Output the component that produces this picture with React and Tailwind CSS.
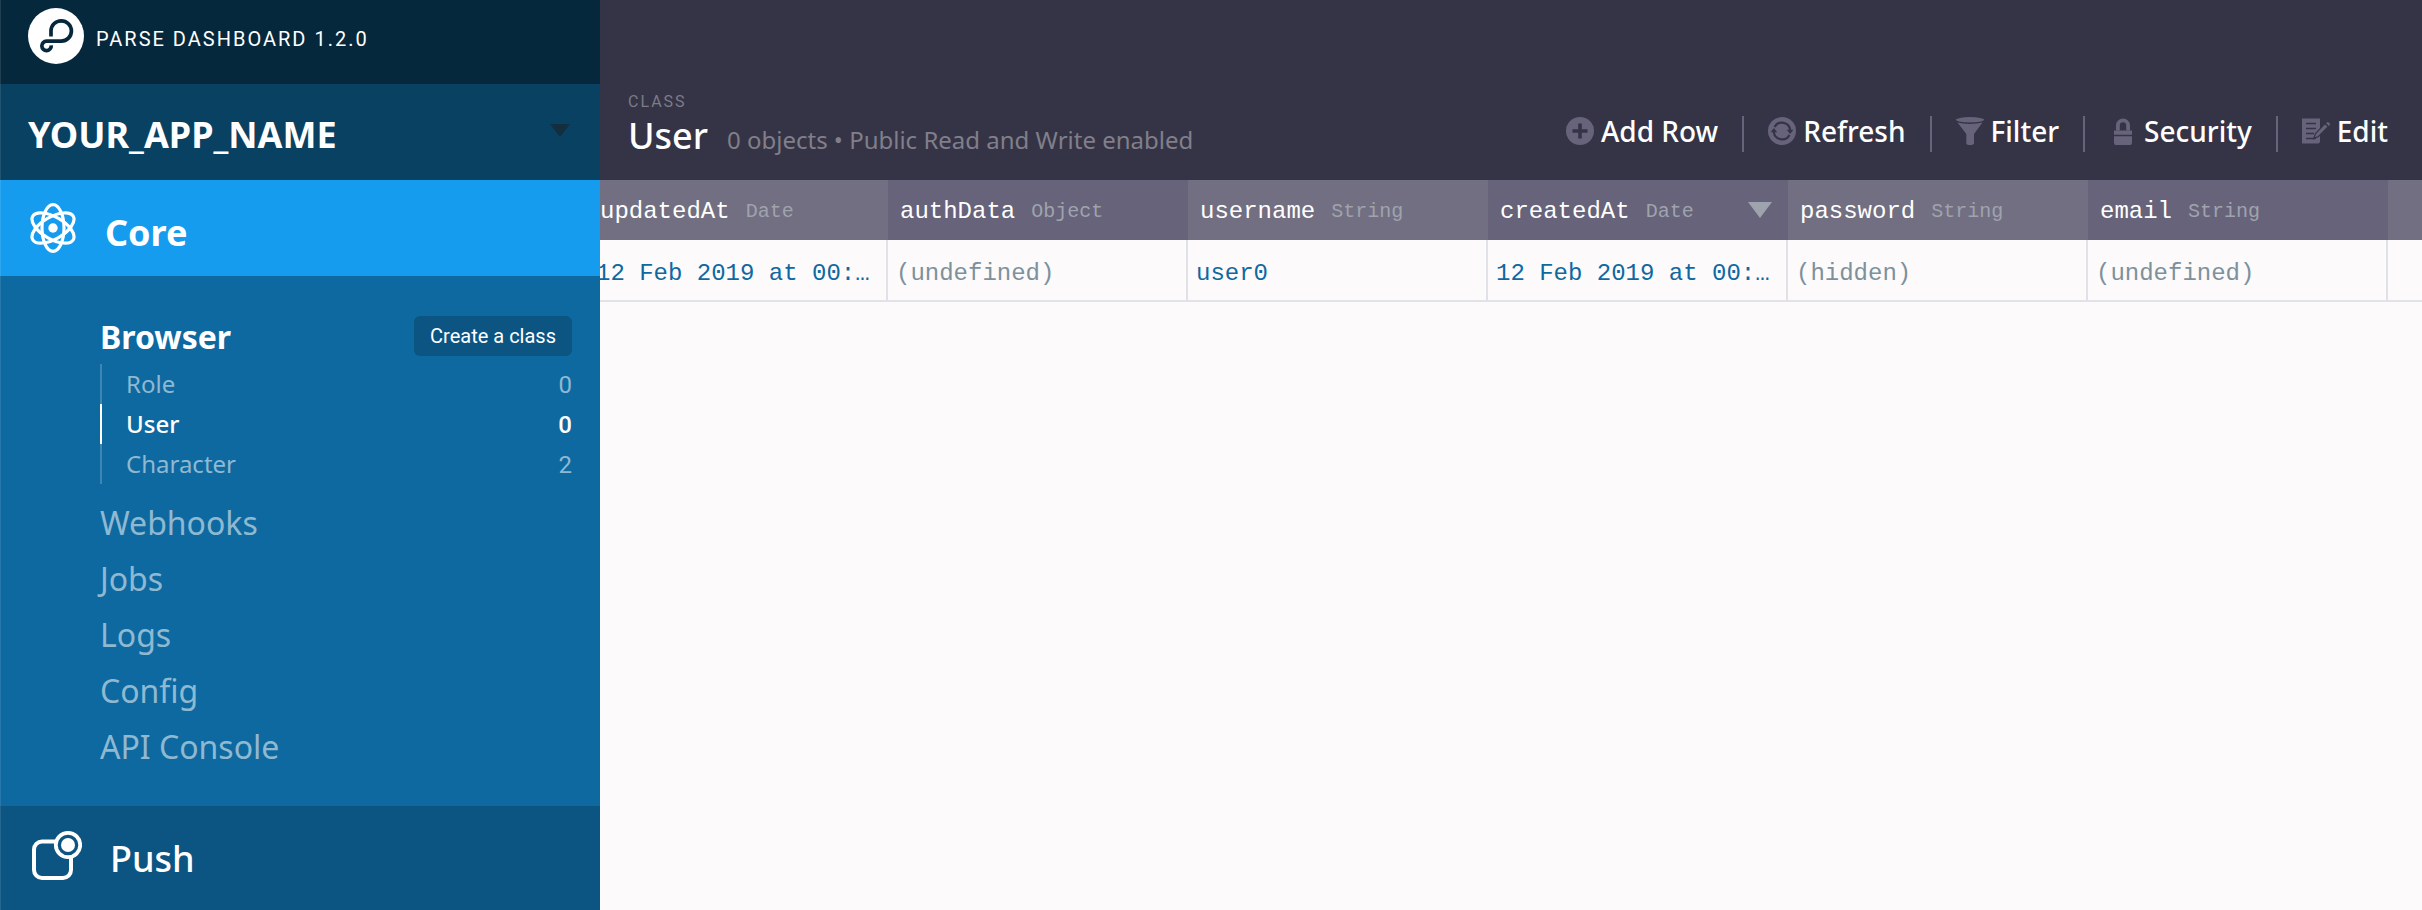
import React from 'react';

const classes = [
  { name: 'Role', count: 0 },
  { name: 'User', count: 0, active: true },
  { name: 'Character', count: 2 },
];

const sections = ['Webhooks', 'Jobs', 'Logs', 'Config', 'API Console'];

const columns = [
  { name: 'updatedAt', type: 'Date', value: '12 Feb 2019 at 00:…' },
  { name: 'authData', type: 'Object', value: '(undefined)', empty: true },
  { name: 'username', type: 'String', value: 'user0' },
  { name: 'createdAt', type: 'Date', value: '12 Feb 2019 at 00:…', sorted: true },
  { name: 'password', type: 'String', value: '(hidden)', empty: true },
  { name: 'email', type: 'String', value: '(undefined)', empty: true },
];

function Logo() {
  return (
    <svg className="size-14 shrink-0" viewBox="28 8 56 56" aria-hidden="true">
      <circle cx="56" cy="36" r="28" fill="#fff" />
      <path
        d="M51 36.5V31A10.2 10.2 0 1 1 61.3 41.2H46.6A4.7 4.7 0 1 0 51.2 45.4"
        fill="none"
        stroke="#06283c"
        strokeWidth="3.7"
      />
    </svg>
  );
}

function AtomIcon() {
  return (
    <svg className="h-[52px] w-12 shrink-0" viewBox="-24 -26 48 52" fill="none" stroke="#fff" strokeWidth="3.2" aria-hidden="true">
      <ellipse rx="11" ry="23.4" />
      <ellipse rx="11" ry="23.4" transform="rotate(60)" />
      <ellipse rx="11" ry="23.4" transform="rotate(120)" />
      <circle r="4.7" fill="#fff" stroke="none" />
    </svg>
  );
}

function PushIcon() {
  return (
    <svg className="h-[52px] w-[52px] shrink-0" viewBox="0 0 52 52" fill="none" stroke="#fff" aria-hidden="true">
      <path d="M25 12.5H12A8 8 0 0 0 4 20.500V41a8 8 0 0 0 8 8H33a8 8 0 0 0 8-8V29" strokeWidth="4" />
      <circle cx="38" cy="16" r="12.200" strokeWidth="3.800" />
      <circle cx="38" cy="16" r="7" fill="#fff" stroke="none" />
    </svg>
  );
}

function AddIcon() {
  return (
    <svg className="size-7" viewBox="0 0 28 28" aria-hidden="true">
      <circle cx="14" cy="14" r="14" fill="#66637a" />
      <path d="M14 6.500v15M6.500 14h15" stroke="#353446" strokeWidth="3.600" />
    </svg>
  );
}

function RefreshIcon() {
  return (
    <svg className="size-7" viewBox="0 0 28 28" aria-hidden="true">
      <circle cx="14" cy="14" r="14" fill="#66637a" />
      <path d="M6.600 10A8.300 8.300 0 0 1 22.200 13.500M21.400 18A8.300 8.300 0 0 1 5.800 14.500" fill="none" stroke="#353446" strokeWidth="2.200" />
      <path d="M18.800 12.800h6.600l-3.300 4.200zM9.200 15.200H2.600l3.300-4.200z" fill="#353446" />
    </svg>
  );
}

function FilterIcon() {
  return (
    <svg className="size-7" viewBox="0 0 28 28" fill="#66637a" aria-hidden="true">
      <ellipse cx="14" cy="2.800" rx="14" ry="2.700" />
      <path d="M1.500 5.600C8 7.400 20 7.400 26.500 5.600L18 17V26Q18 28 14 28T10.300 26V17z" />
    </svg>
  );
}

function LockIcon() {
  return (
    <svg className="size-7" viewBox="0 0 28 28" fill="#66637a" aria-hidden="true">
      <path d="M7 13.500V8.500A7 7 0 0 1 21 8.500v5h-3.800V8.500A3.200 3.200 0 0 0 10.800 8.500v5z" />
      <path d="M5 13.500h18v4.200H5zM5 19.200h18v6.800a2 2 0 0 1-2 2H7a2 2 0 0 1-2-2z" />
    </svg>
  );
}

function EditIcon() {
  return (
    <svg className="size-7" viewBox="0 0 28 28" fill="#66637a" aria-hidden="true">
      <path d="M0 1.500h18v22.500a2.500 2.500 0 0 1-2.500 2.500H0z" />
      <path d="M4 6.500h10M4 11.500h10M4 16.500h8M4 21.500h10" stroke="#353446" strokeWidth="1.500" />
      <path d="M23 6.500l3.200 3.200L16.500 19.500l-4.700 1.900L13.500 16.500z" stroke="#353446" strokeWidth="1.200" />
      <path d="M24.200 6.200l1-0.900a1 1 0 0 1 1.300 0l1.300 1.300a1 1 0 0 1 0 1.300l-1 1z" />
    </svg>
  );
}

const actions = [
  { label: 'Add Row', Icon: AddIcon },
  { label: 'Refresh', Icon: RefreshIcon },
  { label: 'Filter', Icon: FilterIcon },
  { label: 'Security', Icon: LockIcon },
  { label: 'Edit', Icon: EditIcon },
];

function Sidebar() {
  return (
    <aside className="relative z-10 flex w-[600px] shrink-0 flex-col bg-[#0e69a1] text-white">
      <div className="pointer-events-none absolute inset-y-0 left-0 w-px bg-white/10" />
      <div className="flex h-[84px] items-start gap-3 bg-[#06283c] pt-2 pl-7 font-[Roboto,sans-serif]">
        <Logo />
        <span className="pt-4 text-[20px] leading-[30px] tracking-[2px]">PARSE DASHBOARD 1.2.0</span>
      </div>
      <button type="button" className="flex h-24 items-center justify-between bg-[#094162] pr-[30px] pl-7 text-left">
        <span className="pt-1.5 text-[36px] leading-[48px] font-bold">YOUR_APP_NAME</span>
        <svg className="mb-1 h-[13px] w-5" viewBox="0 0 20 13" aria-hidden="true">
          <path d="M0 0h20L10 13z" fill="#132f3f" />
        </svg>
      </button>
      <a href="#core" className="flex h-24 items-center gap-7 bg-[#169cee] pl-[29px] text-[36px] leading-[48px] font-bold">
        <AtomIcon />
        <span className="pt-2.5">Core</span>
      </a>
      <nav className="flex h-[530px] flex-col pt-10 pr-7 pl-[100px]">
        <div className="flex h-10 items-center justify-between">
          <a href="#browser" className="pt-0.5 text-[32px] leading-10 font-bold">Browser</a>
          <button type="button" className="h-10 rounded-md bg-[#0c5582] px-4 font-[Roboto,sans-serif] text-[20px] leading-10">
            Create a class
          </button>
        </div>
        <ul className="mt-2">
          {classes.map((c) => (
            <li key={c.name}>
              <a
                href={'#' + c.name}
                className={
                  c.active
                    ? 'flex h-10 items-center justify-between border-l-2 border-white pl-6 text-[24px] leading-10 font-medium text-white'
                    : 'flex h-10 items-center justify-between border-l-2 border-[#3e87b4] pl-6 text-[24px] leading-10 text-[#8fb9d1]'
                }
              >
                <span>{c.name}</span>
                <span className="pt-0.5 font-[Roboto,sans-serif]">{c.count}</span>
              </a>
            </li>
          ))}
        </ul>
        <ul className="mt-[11px] text-[32px] leading-[56px] text-[#8fb9d1]">
          {sections.map((s) => (
            <li key={s}>
              <a href={'#' + s}>{s}</a>
            </li>
          ))}
        </ul>
      </nav>
      <a href="#push" className="flex grow items-center gap-7 bg-[#0c5582] pb-1.5 pl-[30px] text-[36px] leading-[48px] font-medium">
        <PushIcon />
        <span className="pt-2">Push</span>
      </a>
    </aside>
  );
}

function Toolbar() {
  return (
    <header className="flex h-[180px] items-end justify-between bg-[#353446] px-7 text-white">
      <div className="pb-4">
        <div className="font-[Roboto,sans-serif] text-[16px] leading-5 tracking-[2px] text-[#7c7b87]">CLASS</div>
        <div className="flex items-baseline gap-[19px]">
          <h1 className="text-[36px] leading-[48px] font-medium">User</h1>
          <p className="text-[24px] leading-[48px] text-[#807f8a]">0 objects • Public Read and Write enabled</p>
        </div>
      </div>
      <div className="flex items-center divide-x-2 divide-[#66637a] pr-1.5 pb-7">
        {actions.map(({ label, Icon }) => (
          <button
            key={label}
            type="button"
            className="flex h-9 items-center gap-[7px] px-6 pb-1.5 text-[28px] leading-[30px] font-medium last:pr-0"
          >
            <Icon />
            <span>{label}</span>
          </button>
        ))}
      </div>
    </header>
  );
}

function DataTable() {
  return (
    <div className="-ml-3">
      <table className="w-full table-fixed border-separate border-spacing-0 font-['Liberation_Mono',monospace]">
        <thead>
          <tr className="h-[60px] text-left">
            {columns.map((c) => (
              <th key={c.name} className="w-[300px] p-0 px-3 font-normal odd:bg-[#726f82] even:bg-[#66637a]">
                <div className="flex items-center justify-between">
                  <span className="flex items-center gap-4 pt-1">
                    <span className="text-[24px] leading-9 text-white">{c.name}</span>
                    <span className="text-[20px] leading-9 text-[#9fa3ad]">{c.type}</span>
                  </span>
                  {c.sorted && (
                    <svg className="mr-1 h-4 w-6" viewBox="0 0 24 16" aria-hidden="true">
                      <path d="M0 0h24L12 16z" fill="#9fa3ad" />
                    </svg>
                  )}
                </div>
              </th>
            ))}
            <th className="bg-[#726f82] p-0" aria-label="Add column" />
          </tr>
        </thead>
        <tbody>
          <tr className="h-[62px]">
            {columns.map((c) => (
              <td
                key={c.name}
                className={
                  c.empty
                    ? 'border-r-2 border-b-2 border-[#e0e2e7] p-0 px-2 pt-2 text-[24px] leading-9 whitespace-nowrap text-[#7b919d]'
                    : 'border-r-2 border-b-2 border-[#e0e2e7] p-0 px-2 pt-2 text-[24px] leading-9 whitespace-nowrap text-[#0e69a1]'
                }
              >
                {c.value}
              </td>
            ))}
            <td className="border-b-2 border-[#e0e2e7] p-0" />
          </tr>
        </tbody>
      </table>
    </div>
  );
}

export default function App() {
  return (
    <div className="flex min-h-screen bg-[#fdfafb] font-['Noto_Sans',sans-serif]">
      <Sidebar />
      <main className="min-w-0 grow">
        <Toolbar />
        <DataTable />
      </main>
    </div>
  );
}
